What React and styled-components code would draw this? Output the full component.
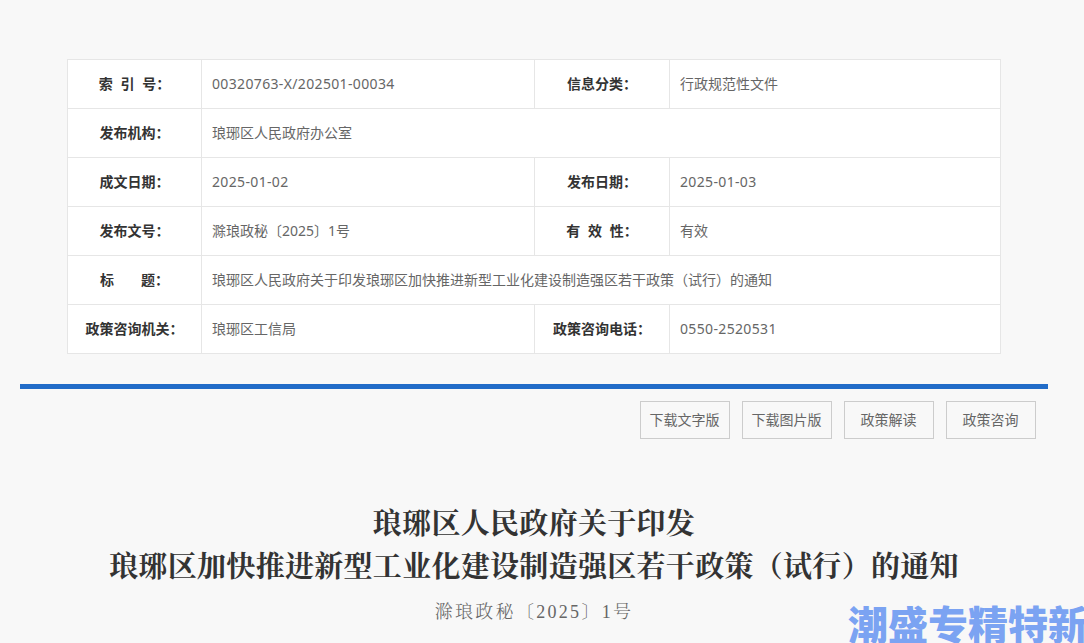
import React from 'react';
import styled, { createGlobalStyle } from 'styled-components';

const GlobalStyle = createGlobalStyle`
  html, body {
    margin: 0;
    padding: 0;
    height: 100%;
    overflow: hidden;
    background-color: #f8f8f8;
  }
  body {
    font-family: "Liberation Sans", "Noto Sans CJK SC", sans-serif;
  }
`;

const Page = styled.div`
  position: relative;
  width: 1084px;
  height: 643px;
  padding: 59px 36px 0 20px;
  box-sizing: border-box;
  overflow: hidden;
`;

const InfoTable = styled.table`
  width: 933px;
  margin-left: 47px;
  border-collapse: collapse;
  table-layout: fixed;
  background-color: #fff;
`;

const LabelCell = styled.th`
  height: 49px;
  padding: 0 0 2px;
  box-sizing: border-box;
  border: 1px solid #e6e6e6;
  font-size: 14px;
  font-weight: 700;
  color: #333;
  text-align: center;
  white-space: pre;
`;

const ValueCell = styled.td`
  height: 49px;
  padding: 0 0 2px 10px;
  box-sizing: border-box;
  border: 1px solid #e6e6e6;
  font-family: "Noto Sans", "Noto Sans CJK SC", sans-serif;
  font-size: 14px;
  letter-spacing: ${(p) => (p.$wide ? '0.35px' : '0')};
  color: #666;
  white-space: nowrap;
`;

const Divider = styled.div`
  height: 5px;
  margin-top: 30px;
  background-color: #226cc8;
`;

const Toolbar = styled.div`
  display: flex;
  justify-content: flex-end;
  gap: 12px;
  margin-top: 12px;
  margin-right: 12px;
`;

const ToolButton = styled.a`
  display: flex;
  align-items: center;
  justify-content: center;
  width: 90px;
  height: 38px;
  padding: 0 1px 2px 0;
  box-sizing: border-box;
  border: 1px solid #ccc;
  font-size: 14px;
  color: #666;
`;

const Heading = styled.h1`
  margin: 64px 0 0;
  font-family: "Liberation Serif", "Noto Serif CJK SC", serif;
  font-size: 29px;
  line-height: 43px;
  letter-spacing: 0.3px;
  font-weight: 700;
  color: #333;
  text-align: center;
`;

const DocNumber = styled.p`
  margin: 11px 0 0;
  font-family: "Liberation Serif", "Noto Serif CJK SC", serif;
  font-size: 18px;
  line-height: 24px;
  letter-spacing: 2.3px;
  font-weight: 300;
  color: #666;
  text-align: center;
`;

const Watermark = styled.div`
  position: absolute;
  left: 848px;
  top: 597px;
  font-family: "Noto Sans CJK SC", sans-serif;
  font-size: 40px;
  line-height: 52px;
  font-weight: 900;
  white-space: nowrap;
  color: #7ba3f2;
`;

const buttons = ['下载文字版', '下载图片版', '政策解读', '政策咨询'];

export default function App() {
  return (
    <Page>
      <GlobalStyle />
      <InfoTable>
        <colgroup>
          <col width="134" />
          <col width="333" />
          <col width="135" />
          <col width="331" />
        </colgroup>
        <tbody>
          <tr>
            <LabelCell>索  引  号：</LabelCell>
            <ValueCell $wide>00320763-X/202501-00034</ValueCell>
            <LabelCell>信息分类：</LabelCell>
            <ValueCell>行政规范性文件</ValueCell>
          </tr>
          <tr>
            <LabelCell>发布机构：</LabelCell>
            <ValueCell colSpan={3}>琅琊区人民政府办公室</ValueCell>
          </tr>
          <tr>
            <LabelCell>成文日期：</LabelCell>
            <ValueCell $wide>2025-01-02</ValueCell>
            <LabelCell>发布日期：</LabelCell>
            <ValueCell $wide>2025-01-03</ValueCell>
          </tr>
          <tr>
            <LabelCell>发布文号：</LabelCell>
            <ValueCell>滁琅政秘〔2025〕1号</ValueCell>
            <LabelCell>有  效  性：</LabelCell>
            <ValueCell>有效</ValueCell>
          </tr>
          <tr>
            <LabelCell>标       题：</LabelCell>
            <ValueCell colSpan={3}>琅琊区人民政府关于印发琅琊区加快推进新型工业化建设制造强区若干政策（试行）的通知</ValueCell>
          </tr>
          <tr>
            <LabelCell>政策咨询机关：</LabelCell>
            <ValueCell>琅琊区工信局</ValueCell>
            <LabelCell>政策咨询电话：</LabelCell>
            <ValueCell $wide>0550-2520531</ValueCell>
          </tr>
        </tbody>
      </InfoTable>
      <Divider />
      <Toolbar>
        {buttons.map((label) => (
          <ToolButton key={label}>{label}</ToolButton>
        ))}
      </Toolbar>
      <Heading>
        琅琊区人民政府关于印发
        <br />
        琅琊区加快推进新型工业化建设制造强区若干政策（试行）的通知
      </Heading>
      <DocNumber>滁琅政秘〔2025〕1号</DocNumber>
      <Watermark>潮盛专精特新</Watermark>
    </Page>
  );
}
